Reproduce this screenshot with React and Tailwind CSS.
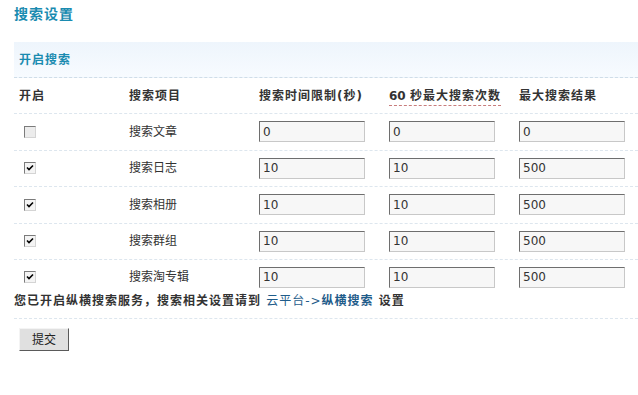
import React from "react";

const rows = [
  { name: "搜索文章", on: false, time: "0", count: "0", max: "0" },
  { name: "搜索日志", on: true, time: "10", count: "10", max: "500" },
  { name: "搜索相册", on: true, time: "10", count: "10", max: "500" },
  { name: "搜索群组", on: true, time: "10", count: "10", max: "500" },
  { name: "搜索淘专辑", on: true, time: "10", count: "10", max: "500" },
];

const Check = ({ on }) => (
  <span
    className={
      "ml-[5px] flex h-[12px] w-[12px] items-center justify-center border border-t-[#7b7b7b] border-l-[#7b7b7b] border-r-[#d4d4d4] border-b-[#d4d4d4] " +
      (on ? "bg-[#f4f4f4]" : "bg-[#ececec]")
    }
  >
    {on && (
      <svg width="8" height="8" viewBox="0 0 8 8">
        <path d="M1 3.5 L3 5.5 L7 1.5" stroke="#000" strokeWidth="1.6" fill="none" />
      </svg>
    )}
  </span>
);

const Box = ({ value }) => (
  <input
    defaultValue={value}
    className="h-[21px] w-[106px] border border-t-[#6e6e6e] border-l-[#6e6e6e] border-r-[#c8c8c8] border-b-[#c8c8c8] bg-[#f7f7f7] px-[3px] text-[12px] text-[#333] outline-none"
  />
);

export default function App() {
  return (
    <div className="min-h-[395px] w-[638px] overflow-hidden bg-white font-['DejaVu_Sans','Noto_Sans_CJK_SC',sans-serif] text-[12px] text-[#333]">
      <div className="pl-[14px] pt-[5px]">
        <h1 className="text-[14px] font-bold leading-[18px] tracking-[1px] text-[#1a8bb0]">搜索设置</h1>

        <div className="mt-[19px] flex h-[36px] items-center border-b border-dashed border-[#cfdde8] bg-gradient-to-b from-[#eef5fc] to-[#f7fbff] px-[5px]">
          <span className="font-bold tracking-[1px] text-[#1a8bb0]">开启搜索</span>
        </div>

        <div className="grid h-[36px] grid-cols-[110px_130px_130px_130px_1fr] items-center border-b border-dashed border-[#dde6ee] font-bold tracking-[1px]">
          <span className="px-[5px]">开启</span>
          <span className="px-[5px]">搜索项目</span>
          <span className="px-[5px]">搜索时间限制(秒)</span>
          <span className="px-[5px]">
            <span className="border-b border-dashed border-[#c87c7c] pb-[2px]">
              <span className="tracking-normal">60 </span>秒最大搜索次数
            </span>
          </span>
          <span className="px-[5px]">最大搜索结果</span>
        </div>

        {rows.map((r, i) => (
          <div
            key={r.name}
            className={
              "grid grid-cols-[110px_130px_130px_130px_1fr] items-center " +
              (i < rows.length - 1 ? "h-[36.5px] border-b border-dashed border-[#dde6ee]" : "h-[32px] pt-[2px]")
            }
          >
            <span className="px-[5px]">
              <Check on={r.on} />
            </span>
            <span className="px-[5px]">{r.name}</span>
            <span className="px-[5px]">
              <Box value={r.time} />
            </span>
            <span className="px-[5px]">
              <Box value={r.count} />
            </span>
            <span className="px-[5px]">
              <Box value={r.max} />
            </span>
          </div>
        ))}

        <div className="flex h-[27px] items-start border-b border-dashed border-[#dde6ee] pt-[2px] font-bold leading-[14px] tracking-[1px]">
          您已开启纵横搜索服务，搜索相关设置请到&nbsp;
          <a className="text-[#1f5c8a]">
            <span className="font-normal">云平台-&gt;</span>纵横搜索
          </a>
          &nbsp;设置
        </div>

        <div className="px-[5px] pt-[9px]">
          <button className="h-[23px] w-[50px] border border-t-[#f4f4f4] border-l-[#f4f4f4] border-r-[#5a5a5a] border-b-[#5a5a5a] bg-[#e0e0e0] text-[12px] text-[#222]">
            提交
          </button>
        </div>
      </div>
    </div>
  );
}
